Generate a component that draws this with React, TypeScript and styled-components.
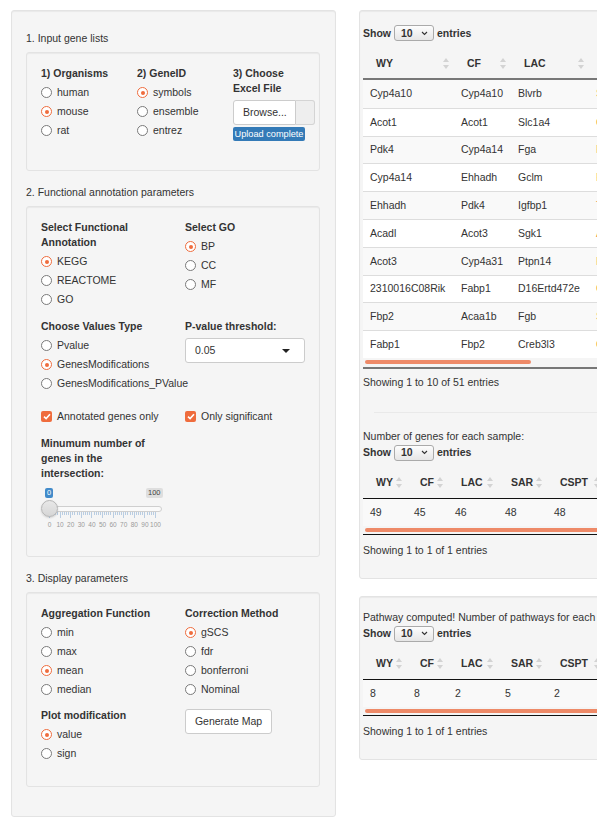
import React from "react";
import styled, { createGlobalStyle } from "styled-components";

const ORANGE = "#ef6c3d";

const GlobalStyle = createGlobalStyle`
  html, body {
    margin: 0;
    padding: 0;
    overflow: hidden;
    background: #fff;
  }
  body {
    font-family: "Liberation Sans", Arial, sans-serif;
    font-size: 10.5px;
    line-height: 15px;
    color: #333;
  }
`;

const Page = styled.div`
  display: flex;
  align-items: flex-start;
  gap: 23px;
  padding: 10px 0 0 11px;
  width: 1000px;
`;

/* ---------- sidebar ---------- */

const SidePanel = styled.div`
  box-sizing: border-box;
  width: 325px;
  flex: none;
  background: #f5f5f5;
  border: 1px solid #e3e3e3;
  border-radius: 3px;
  box-shadow: inset 0 1px 1px rgba(0, 0, 0, 0.05);
  padding: 20px 15px 29px 14px;
`;

const SectionTitle = styled.div`
  margin-bottom: 6px;
`;

const Well = styled.div<{ $pt: number; $pb: number }>`
  background: #f5f5f5;
  border: 1px solid #e3e3e3;
  border-radius: 3px;
  box-shadow: inset 0 1px 1px rgba(0, 0, 0, 0.05);
  padding: ${(p) => p.$pt}px 14px ${(p) => p.$pb}px 14px;
  margin-bottom: 14px;
  &:last-child {
    margin-bottom: 0;
  }
`;

const Columns = styled.div<{ $cols: string; $mt?: number }>`
  display: grid;
  grid-template-columns: ${(p) => p.$cols};
  margin-top: ${(p) => p.$mt ?? 0}px;
`;

const FieldLabel = styled.div<{ $mt?: number }>`
  font-weight: bold;
  margin-top: ${(p) => p.$mt ?? 0}px;
  margin-bottom: 2px;
`;

const Option = styled.label`
  display: flex;
  align-items: center;
  gap: 5px;
  height: 19px;
  white-space: nowrap;
`;

const RadioDot = styled.span<{ $on?: boolean }>`
  box-sizing: border-box;
  flex: none;
  width: 11px;
  height: 11px;
  border-radius: 50%;
  border: ${(p) => (p.$on ? `1.5px solid ${ORANGE}` : "1px solid #7a7a7a")};
  background: #fff;
  display: flex;
  align-items: center;
  justify-content: center;
  &::after {
    content: "";
    width: 4px;
    height: 4px;
    border-radius: 50%;
    background: ${ORANGE};
    display: ${(p) => (p.$on ? "block" : "none")};
  }
`;

const CheckBox = styled.span`
  flex: none;
  width: 11px;
  height: 11px;
  border-radius: 2px;
  background: ${ORANGE};
  display: flex;
  align-items: center;
  justify-content: center;
`;

const Radio = ({ label, on }: { label: string; on?: boolean }) => (
  <Option>
    <RadioDot $on={on} />
    {label}
  </Option>
);

const Check = ({ label }: { label: string }) => (
  <Option>
    <CheckBox>
      <svg width="8" height="7" viewBox="0 0 8 7">
        <path d="M1 3.6 L3.1 5.6 L7 1.2" stroke="#fff" strokeWidth="1.6" fill="none" />
      </svg>
    </CheckBox>
    {label}
  </Option>
);

const FileGroup = styled.div`
  display: flex;
  width: 82px;
  height: 25px;
  margin-top: 4px;
`;

const BrowseButton = styled.span`
  box-sizing: border-box;
  width: 63px;
  display: flex;
  align-items: center;
  padding-left: 9px;
  background: #fff;
  border: 1px solid #ccc;
  border-radius: 3px 0 0 3px;
`;

const FileName = styled.span`
  flex: 1;
  background: #eee;
  border: 1px solid #d4d4d4;
  border-left: 0;
  border-radius: 0 3px 3px 0;
`;

const UploadBar = styled.div`
  width: 72px;
  height: 14px;
  margin-top: 2px;
  border-radius: 2px;
  background: #337ab7;
  color: #fff;
  font-size: 9.2px;
  line-height: 14px;
  text-align: center;
  white-space: nowrap;
`;

const SelectBox = styled.div`
  box-sizing: border-box;
  width: 120px;
  height: 25px;
  margin-top: 4px;
  display: flex;
  align-items: center;
  justify-content: space-between;
  padding: 0 14px 0 9px;
  background: #fff;
  border: 1px solid #ccc;
  border-radius: 3px;
`;

const PlainButton = styled.div`
  box-sizing: border-box;
  width: 87px;
  height: 25px;
  margin-top: 10px;
  display: flex;
  align-items: center;
  justify-content: center;
  background: #fff;
  border: 1px solid #ccc;
  border-radius: 3px;
`;

/* ---------- range slider ---------- */

const Slider = styled.div`
  position: relative;
  width: 121px;
  height: 48px;
`;

const Badge = styled.span<{ $left: number; $blue?: boolean }>`
  position: absolute;
  top: 5px;
  left: ${(p) => p.$left}px;
  height: 10px;
  padding: 0 2px;
  border-radius: 2px;
  font-size: 7.5px;
  line-height: 10px;
  background: ${(p) => (p.$blue ? "#428bca" : "#dedede")};
  color: ${(p) => (p.$blue ? "#fff" : "#444")};
`;

const Track = styled.div`
  position: absolute;
  top: 23px;
  left: 8px;
  right: 0;
  height: 6px;
  box-sizing: border-box;
  border: 1px solid #cfcfcf;
  border-radius: 3px;
  background: #fafafa;
`;

const Handle = styled.div`
  position: absolute;
  top: 17px;
  left: 0;
  width: 17px;
  height: 17px;
  box-sizing: border-box;
  border-radius: 50%;
  border: 1px solid #b5b5b5;
  background: linear-gradient(#e8e8e8, #d6d6d6);
  box-shadow: 0 1px 2px rgba(0, 0, 0, 0.15);
`;

const Tick = styled.span<{ $major: boolean }>`
  position: absolute;
  top: 29px;
  width: 1px;
  height: ${(p) => (p.$major ? 6 : 3)}px;
  background: #b9cde2;
`;

const TickLabel = styled.span`
  position: absolute;
  top: 38px;
  transform: translateX(-50%);
  font-size: 6.5px;
  line-height: 8px;
  color: #9a9a9a;
`;

const RangeSlider = () => {
  const step = 10.6;
  const ticks = Array.from({ length: 51 }, (_, i) => i);
  return (
    <Slider>
      <Badge $left={4} $blue>
        0
      </Badge>
      <Badge $left={105}>100</Badge>
      <Track />
      {ticks.map((i) => (
        <Tick key={i} $major={i % 5 === 0} style={{ left: 8 + (i * step) / 5 }} />
      ))}
      {Array.from({ length: 11 }, (_, i) => (
        <TickLabel key={i} style={{ left: 8.5 + i * step }}>
          {i * 10}
        </TickLabel>
      ))}
      <Handle />
    </Slider>
  );
};

/* ---------- result tables ---------- */

const RightColumn = styled.div`
  display: flex;
  flex-direction: column;
  gap: 17px;
  flex: none;
`;

const ResultPanel = styled.div`
  box-sizing: border-box;
  width: 330px;
  background: #f5f5f5;
  border: 1px solid #e3e3e3;
  border-radius: 3px;
  box-shadow: inset 0 1px 1px rgba(0, 0, 0, 0.05);
  padding: 13px 0 20px 3px;
  overflow: hidden;
`;

const Caption = styled.div`
  white-space: nowrap;
`;

const LengthRow = styled.div`
  display: flex;
  align-items: center;
  height: 18px;
  font-weight: bold;
`;

const LengthSelect = styled.span`
  box-sizing: border-box;
  display: inline-flex;
  align-items: center;
  justify-content: space-between;
  width: 40px;
  height: 16px;
  margin: 0 3px;
  padding: 0 5px 0 6px;
  border: 1px solid #aaa;
  border-radius: 3px;
  background: linear-gradient(#fdfdfd, #e6e6e6);
`;

const HeadRow = styled.div<{ $heavy?: boolean }>`
  display: flex;
  height: 30px;
  margin-top: 6px;
  font-weight: bold;
  border-bottom: ${(p) => (p.$heavy ? "2px solid #777" : "1px solid #111")};
`;

const HeadCell = styled.div<{ $w: number }>`
  box-sizing: border-box;
  flex: none;
  width: ${(p) => p.$w}px;
  display: flex;
  align-items: center;
  justify-content: space-between;
  padding: 0 5px 0 13px;
`;

const BodyRow = styled.div<{ $h: number; $odd: boolean }>`
  box-sizing: border-box;
  display: flex;
  height: ${(p) => p.$h}px;
  background: ${(p) => (p.$odd ? "#f9f9f9" : "#fff")};
  & + & {
    border-top: 1px solid #ddd;
  }
`;

const Cell = styled.div<{ $w: number; $accent?: boolean }>`
  box-sizing: border-box;
  flex: none;
  width: ${(p) => p.$w}px;
  display: flex;
  align-items: center;
  padding-left: 7px;
  white-space: nowrap;
  color: ${(p) => (p.$accent ? "#e98f3d" : "#333")};
`;

const ScrollArea = styled.div<{ $heavy?: boolean }>`
  padding: 2px 0 ${(p) => (p.$heavy ? 3 : 2)}px 2px;
  border-bottom: ${(p) => (p.$heavy ? "2px solid #777" : "1px solid #111")};
`;

const Thumb = styled.div<{ $w: number }>`
  width: ${(p) => p.$w}px;
  height: 4px;
  border-radius: 2px;
  background: #ee8a68;
`;

const Info = styled.div<{ $mt: number }>`
  margin-top: ${(p) => p.$mt}px;
  white-space: nowrap;
`;

const Rule = styled.div`
  height: 1px;
  margin: 22px 0 16px 11px;
  background: #e9e9e9;
`;

const SortIcon = () => (
  <svg width="6" height="11" viewBox="0 0 6 11">
    <path d="M3 0 L6 4 H0 Z" fill="#d3d3d3" />
    <path d="M3 11 L6 7 H0 Z" fill="#d3d3d3" />
  </svg>
);

const Chevron = () => (
  <svg width="7" height="5" viewBox="0 0 7 5">
    <path d="M1 1 L3.5 3.5 L6 1" stroke="#333" strokeWidth="1.1" fill="none" />
  </svg>
);

type TableProps = {
  columns: string[];
  widths: number[];
  rows: string[][];
  rowHeight: number;
  thumb: number;
  info: string;
  heavy?: boolean;
  accentCol?: number;
};

const DataTable = ({ columns, widths, rows, rowHeight, thumb, info, heavy, accentCol }: TableProps) => (
  <div>
    <LengthRow>
      Show
      <LengthSelect>
        10
        <Chevron />
      </LengthSelect>
      entries
    </LengthRow>
    <HeadRow $heavy={heavy}>
      {columns.map((c, i) => (
        <HeadCell key={c} $w={widths[i]}>
          {c}
          <SortIcon />
        </HeadCell>
      ))}
    </HeadRow>
    {rows.map((r, ri) => (
      <BodyRow key={ri} $h={rowHeight} $odd={ri % 2 === 0}>
        {r.map((v, ci) => (
          <Cell key={ci} $w={widths[ci]} $accent={ci === accentCol}>
            {v}
          </Cell>
        ))}
      </BodyRow>
    ))}
    <ScrollArea $heavy={heavy}>
      <Thumb $w={thumb} />
    </ScrollArea>
    <Info $mt={heavy ? 6 : 8}>{info}</Info>
  </div>
);

const geneRows = [
  ["Cyp4a10", "Cyp4a10", "Blvrb", "Slc25a20"],
  ["Acot1", "Acot1", "Slc1a4", "Cd36"],
  ["Pdk4", "Cyp4a14", "Fga", "Pck1"],
  ["Cyp4a14", "Ehhadh", "Gclm", "Fgl1"],
  ["Ehhadh", "Pdk4", "Igfbp1", "Tat"],
  ["Acadl", "Acot3", "Sgk1", "Angptl4"],
  ["Acot3", "Cyp4a31", "Ptpn14", "Plin2"],
  ["2310016C08Rik", "Fabp1", "D16Ertd472e", "Cpt1a"],
  ["Fbp2", "Acaa1b", "Fgb", "Serpina7"],
  ["Fabp1", "Fbp2", "Creb3l3", "Cyp4a14"],
];

const sampleCols = ["WY", "CF", "LAC", "SAR", "CSPT"];
const sampleWidths = [44, 41, 50, 49, 58];

export default function App() {
  return (
    <>
      <GlobalStyle />
      <Page>
        <SidePanel>
          <SectionTitle>1. Input gene lists</SectionTitle>
          <Well $pt={13} $pb={29}>
            <Columns $cols="96px 96px 82px">
              <div>
                <FieldLabel>1) Organisms</FieldLabel>
                <Radio label="human" />
                <Radio label="mouse" on />
                <Radio label="rat" />
              </div>
              <div>
                <FieldLabel>2) GeneID</FieldLabel>
                <Radio label="symbols" on />
                <Radio label="ensemble" />
                <Radio label="entrez" />
              </div>
              <div>
                <FieldLabel>
                  3) Choose
                  <br />
                  Excel File
                </FieldLabel>
                <FileGroup>
                  <BrowseButton>Browse...</BrowseButton>
                  <FileName />
                </FileGroup>
                <UploadBar>Upload complete</UploadBar>
              </div>
            </Columns>
          </Well>

          <SectionTitle>2. Functional annotation parameters</SectionTitle>
          <Well $pt={13} $pb={25}>
            <Columns $cols="144px 130px">
              <div>
                <FieldLabel>
                  Select Functional
                  <br />
                  Annotation
                </FieldLabel>
                <Radio label="KEGG" on />
                <Radio label="REACTOME" />
                <Radio label="GO" />
              </div>
              <div>
                <FieldLabel>Select GO</FieldLabel>
                <Radio label="BP" on />
                <Radio label="CC" />
                <Radio label="MF" />
              </div>
            </Columns>
            <Columns $cols="144px 130px" $mt={10}>
              <div>
                <FieldLabel>Choose Values Type</FieldLabel>
                <Radio label="Pvalue" />
                <Radio label="GenesModifications" on />
                <Radio label="GenesModifications_PValue" />
              </div>
              <div>
                <FieldLabel>P-value threshold:</FieldLabel>
                <SelectBox>
                  0.05
                  <svg width="8" height="4" viewBox="0 0 8 4">
                    <path d="M0 0 H8 L4 4 Z" fill="#222" />
                  </svg>
                </SelectBox>
              </div>
            </Columns>
            <Columns $cols="144px 130px" $mt={14}>
              <Check label="Annotated genes only" />
              <Check label="Only significant" />
            </Columns>
            <FieldLabel $mt={10}>
              Minumum number of
              <br />
              genes in the
              <br />
              intersection:
            </FieldLabel>
            <RangeSlider />
          </Well>

          <SectionTitle>3. Display parameters</SectionTitle>
          <Well $pt={13} $pb={23}>
            <Columns $cols="144px 130px">
              <div>
                <FieldLabel>Aggregation Function</FieldLabel>
                <Radio label="min" />
                <Radio label="max" />
                <Radio label="mean" on />
                <Radio label="median" />
                <FieldLabel $mt={9}>Plot modification</FieldLabel>
                <Radio label="value" on />
                <Radio label="sign" />
              </div>
              <div>
                <FieldLabel>Correction Method</FieldLabel>
                <Radio label="gSCS" on />
                <Radio label="fdr" />
                <Radio label="bonferroni" />
                <Radio label="Nominal" />
                <PlainButton>Generate Map</PlainButton>
              </div>
            </Columns>
          </Well>
        </SidePanel>

        <RightColumn>
          <ResultPanel>
            <DataTable
              columns={["WY", "CF", "LAC", "SAR"]}
              widths={[91, 57, 78, 90]}
              rows={geneRows}
              rowHeight={27.8}
              thumb={166}
              info="Showing 1 to 10 of 51 entries"
              heavy
              accentCol={3}
            />
            <Rule />
            <Caption>Number of genes for each sample:</Caption>
            <DataTable
              columns={sampleCols}
              widths={sampleWidths}
              rows={[["49", "45", "46", "48", "48"]]}
              rowHeight={27}
              thumb={300}
              info="Showing 1 to 1 of 1 entries"
            />
          </ResultPanel>
          <ResultPanel>
            <Caption>Pathway computed! Number of pathways for each sample:</Caption>
            <DataTable
              columns={sampleCols}
              widths={sampleWidths}
              rows={[["8", "8", "2", "5", "2"]]}
              rowHeight={27}
              thumb={300}
              info="Showing 1 to 1 of 1 entries"
            />
          </ResultPanel>
        </RightColumn>
      </Page>
    </>
  );
}
